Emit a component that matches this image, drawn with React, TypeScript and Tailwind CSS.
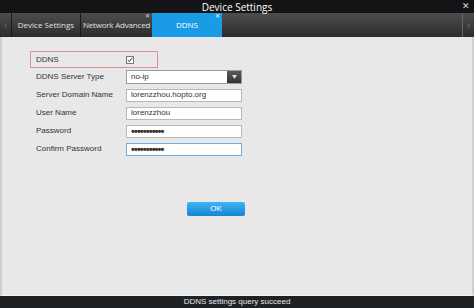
import React from "react";

const Field = ({ label, children }: { label: string; children: React.ReactNode }) => (
  <div className="flex items-center h-[18px]">
    <div className="w-[96px] pl-[6px] text-[8px] text-[#333]">{label}</div>
    {children}
  </div>
);

const Input = ({ value, focus, pw }: { value: string; focus?: boolean; pw?: boolean }) => (
  <div
    className={`w-[116px] h-[13px] bg-white border flex items-center pl-[4px] text-[#333] ${
      focus ? "border-[#6aaee6]" : "border-[#b8b8b8]"
    } ${pw ? "text-[11px] tracking-[-0.9px] font-bold" : "text-[8px]"}`}
  >
    {value}
  </div>
);

export default function App() {
  return (
    <div className="w-[474px] h-[308px] flex flex-col bg-[#e8e8e8] overflow-hidden" style={{ fontFamily: '"Liberation Sans", Arial, sans-serif' }}>
      {/* Title */}
      <div className="h-[13px] bg-[#141416] flex items-center justify-center relative">
        <span className="text-white text-[10px] leading-none" style={{ fontFamily: '"Open Sans", sans-serif' }}>Device Settings</span>
        <span className="absolute right-[4px] top-[0px] text-[#ddd] text-[9px] leading-[13px]">✕</span>
      </div>
      {/* Tabs */}
      <div className="h-[24px] flex bg-gradient-to-b from-[#4e4e4e] to-[#2b2b2b] whitespace-nowrap" style={{ fontFamily: '"Open Sans", sans-serif' }}>
        <div className="w-[12px] border-r border-[#1a1a1a] flex items-center justify-center text-[#777] text-[9px]">‹</div>
        <div className="w-[69px] border-r border-[#1a1a1a] flex items-center justify-center text-[#e0e0e0] text-[8px]">Device Settings</div>
        <div className="w-[71px] relative flex items-center justify-center text-[#e0e0e0] text-[8px] tracking-[-0.2px]">
          Network Advanced
          <span className="absolute right-[2px] top-[0px] text-[6px] leading-none text-[#ddd]">✕</span>
        </div>
        <div className="w-[70px] relative bg-[#1a9be6] flex items-center justify-center text-white text-[8px]">
          DDNS
          <span className="absolute right-[2px] top-[0px] text-[6px] leading-none text-white">✕</span>
        </div>
        <div className="flex-1" />
        <div className="w-[12px] border-l border-[#666] flex items-center justify-center text-[#888] text-[9px]">›</div>
      </div>
      {/* Content */}
      <div className="flex-1 border-l-[2px] border-r-[2px] border-[#cfcfcf] border-b border-b-[#f4f4f4] bg-[#e8e8e8] pt-[14px] pl-[28px]">
        <div className="w-[128px] h-[17px] border border-[#e58b9a] flex items-center">
          <div className="w-[95px] pl-[5px] text-[8px] text-[#333]">DDNS</div>
          <div className="w-[8px] h-[8px] border border-[#777] bg-white flex items-center justify-center">
            <svg width="6" height="6" viewBox="0 0 6 6"><path d="M0.8 3 L2.4 4.6 L5.4 0.8" fill="none" stroke="#333" strokeWidth="1" /></svg>
          </div>
        </div>
        <div className="flex flex-col">
          <Field label="DDNS Server Type">
            <div className="w-[116px] h-[14px] bg-white border border-[#9a9a9a] flex items-center">
              <span className="flex-1 pl-[4px] text-[8px] text-[#333]">no-ip</span>
              <div className="w-[14px] h-full bg-gradient-to-b from-[#5a5a5a] to-[#333] flex items-center justify-center">
                <svg width="5" height="4" viewBox="0 0 5 4"><path d="M0 0 L5 0 L2.5 4 Z" fill="#ddd" /></svg>
              </div>
            </div>
          </Field>
          <Field label="Server Domain Name"><Input value="lorenzzhou.hopto.org" /></Field>
          <Field label="User Name"><Input value="lorenzzhou" /></Field>
          <Field label="Password"><Input value="•••••••••••" pw /></Field>
          <Field label="Confirm Password"><Input value="•••••••••••" pw focus /></Field>
        </div>
        <div className="mt-[44px] ml-[157px] w-[58px] h-[14px] rounded-[2px] bg-gradient-to-b from-[#3fb4f5] to-[#1484d4] flex items-center justify-center text-white text-[8px]">OK</div>
      </div>
      {/* Status */}
      <div className="h-[12px] bg-[#1f2225] flex items-center justify-center text-[#e8e8e8] text-[8px] leading-none">DDNS settings query succeed</div>
    </div>
  );
}
